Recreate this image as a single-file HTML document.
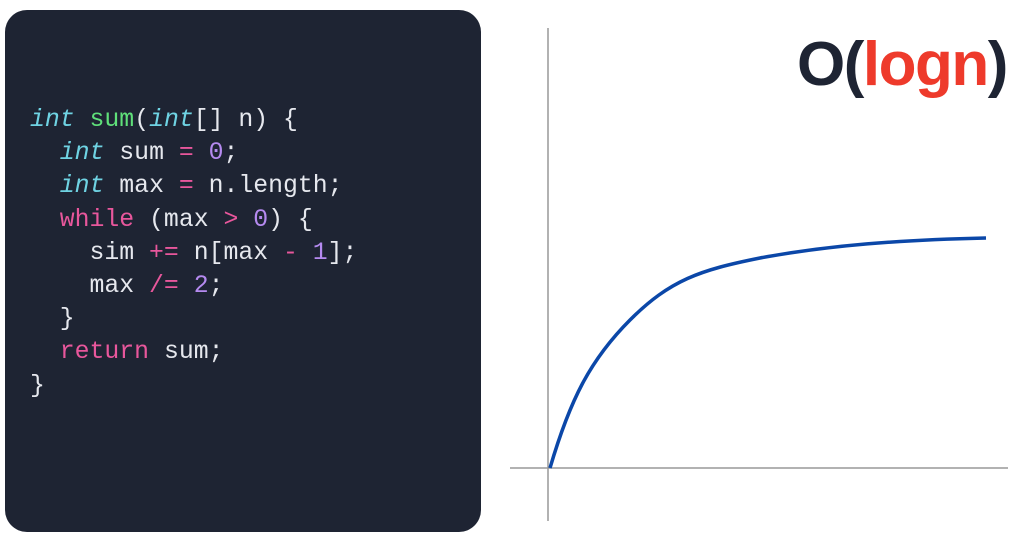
<!DOCTYPE html>
<html><head><style>
body{margin:0;width:1021px;height:540px;background:#fff;position:relative;overflow:hidden}
.panel{position:absolute;left:5px;top:10px;width:476px;height:522px;background:#1e2433;border-radius:22px}
pre{position:absolute;left:30px;top:104px;margin:0;font-family:"Liberation Mono",monospace;font-size:24.8px;line-height:33.2px;color:#e6e8ee}
.t{color:#6fd3e3;font-style:italic}.f{color:#5fe07a}.k{color:#e8579c}.n{color:#b58af0}
.title{position:absolute;left:797px;top:29px;font-family:"Liberation Sans",sans-serif;font-weight:bold;font-size:62px;line-height:71px;color:#1e2433;letter-spacing:-1.5px}
.title span{color:#ee3a2b}
</style></head><body>
<div class="panel"></div>
<pre><span class="t">int</span> <span class="f">sum</span>(<span class="t">int</span>[] n) {
  <span class="t">int</span> sum <span class="k">=</span> <span class="n">0</span>;
  <span class="t">int</span> max <span class="k">=</span> n.length;
  <span class="k">while</span> (max <span class="k">&gt;</span> <span class="n">0</span>) {
    sim <span class="k">+=</span> n[max <span class="k">-</span> <span class="n">1</span>];
    max <span class="k">/=</span> <span class="n">2</span>;
  }
  <span class="k">return</span> sum;
}</pre>
<svg width="1021" height="540" style="position:absolute;left:0;top:0">
<line x1="548" y1="28" x2="548" y2="521" stroke="#999" stroke-width="1.5"/>
<line x1="510" y1="468" x2="1008" y2="468" stroke="#999" stroke-width="1.5"/>
<path d="M550 468 C570 400 590 360 630 320 C670 280 700 270 760 258 C830 245 900 240 986 238" fill="none" stroke="#0b47a8" stroke-width="3.5"/>
</svg>
<div class="title">O(<span>logn</span>)</div>
</body></html>
